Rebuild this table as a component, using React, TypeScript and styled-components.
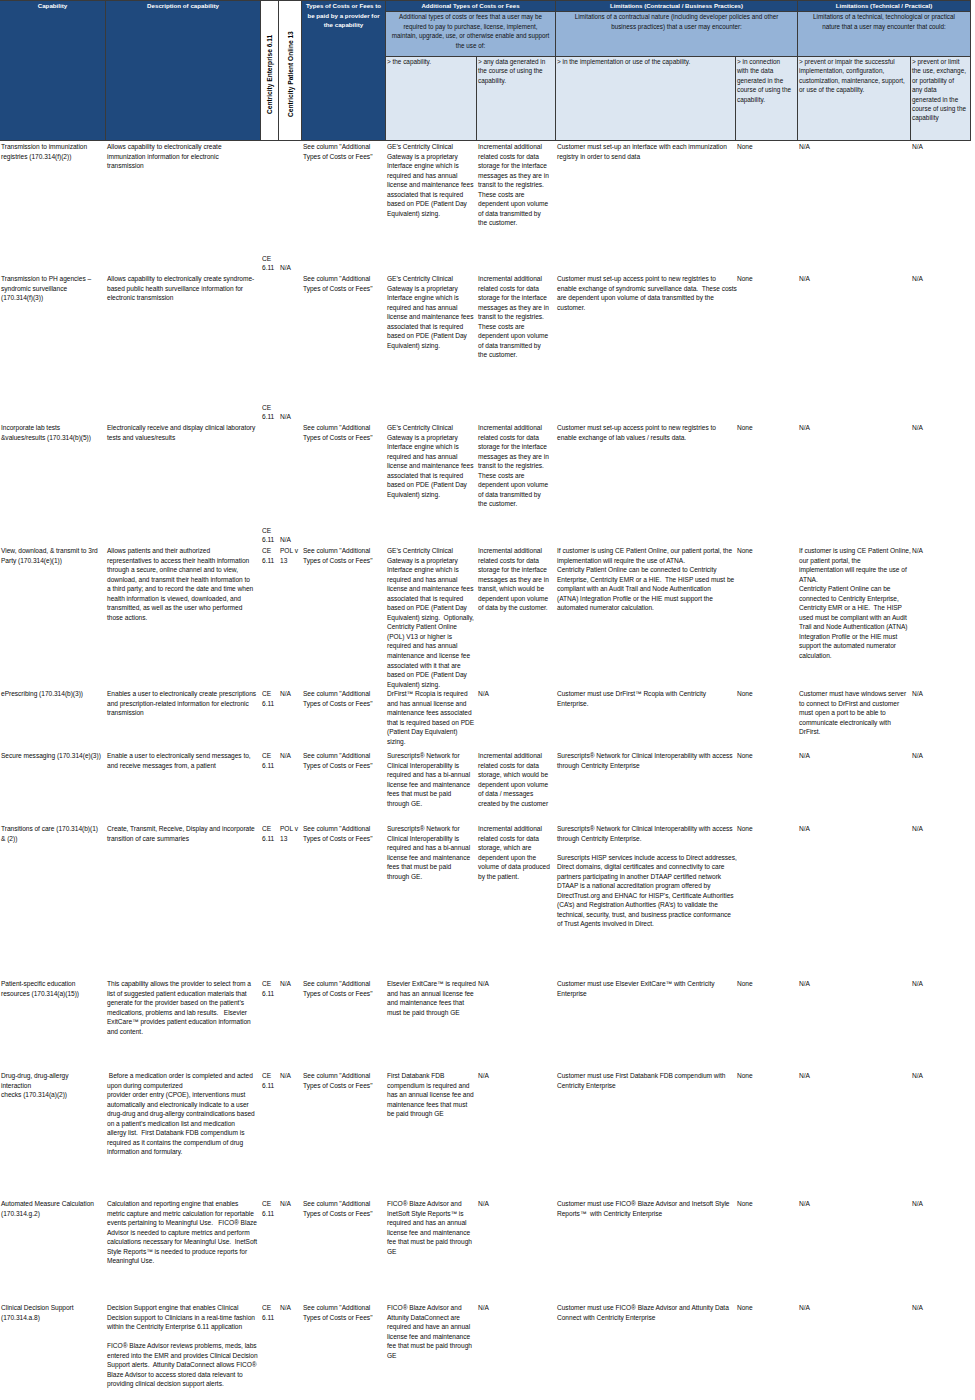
import React from "react";
import styled, { createGlobalStyle } from "styled-components";

const Global = createGlobalStyle`
  html, body { margin: 0; padding: 0; background: #ffffff; }
  body { font-family: "Liberation Sans", Arial, sans-serif; color: #0c0c0c; }
`;

const COLS = "105px 154px 17px 22px 83px 90px 78px 179px 61px 112px 59px";
const DARK = "#1f497d";
const LIGHT = "#95b3d7";
const PALE = "#dce6f1";

const Sheet = styled.div`
  width: 975px;
`;

const Header = styled.div`
  display: grid;
  grid-template-columns: ${COLS};
  grid-template-rows: 10px 44px 83px;
  gap: 1px;
  padding: 1px 1px 1px 0;
  width: max-content;
  background: #3a3a3a;
`;

const DarkColumn = styled.div<{ $col: number }>`
  grid-column: ${(p) => p.$col};
  grid-row: 1 / 4;
  background: ${DARK};
  color: #ffffff;
  font-weight: 700;
  font-size: 6.2px;
  line-height: 9.5px;
  text-align: center;
  white-space: pre;
`;

const RotatedColumn = styled.div<{ $col: number }>`
  grid-column: ${(p) => p.$col};
  grid-row: 1 / 4;
  background: #ffffff;
  writing-mode: vertical-rl;
  transform: rotate(180deg);
  display: flex;
  align-items: center;
  justify-content: center;
  padding-bottom: 8px;
  font-weight: 700;
  font-size: 6.6px;
  color: #000000;
  white-space: nowrap;
`;

const GroupTitle = styled.div<{ $cols: string }>`
  grid-column: ${(p) => p.$cols};
  grid-row: 1;
  background: ${DARK};
  color: #ffffff;
  font-weight: 700;
  font-size: 6.1px;
  line-height: 10px;
  text-align: center;
  white-space: nowrap;
`;

const GroupNote = styled.div<{ $cols: string }>`
  grid-column: ${(p) => p.$cols};
  grid-row: 2;
  background: ${LIGHT};
  color: #111111;
  font-size: 6.3px;
  line-height: 9.5px;
  text-align: center;
  white-space: pre;
`;

const SubHead = styled.div<{ $col: number }>`
  grid-column: ${(p) => p.$col};
  grid-row: 3;
  background: ${PALE};
  color: #111111;
  font-size: 6.4px;
  line-height: 9.4px;
  white-space: pre;
  padding: 0 0 0 1px;
`;

const Row = styled.div<{ $h: number }>`
  display: grid;
  grid-template-columns: ${COLS};
  column-gap: 1px;
  height: ${(p) => p.$h}px;
`;

const Cell = styled.div<{ $bottom?: boolean }>`
  align-self: ${(p) => (p.$bottom ? "end" : "start")};
  font-size: 6.6px;
  line-height: 9.55px;
  letter-spacing: -0.03px;
  white-space: pre;
  padding: 1px 0 0 1px;
  color: #0c0c0c;
`;

const SEE = 'See column "Additional\nTypes of Costs or Fees"';
const GATEWAY =
  "GE’s Centricity Clinical\nGateway is a proprietary\nInterface engine which is\nrequired and has annual\nlicense and maintenance fees\nassociated that is required\nbased on PDE (Patient Day\nEquivalent) sizing.";
const STORAGE =
  "Incremental additional\nrelated costs for data\nstorage for the interface\nmessages as they are in\ntransit to the registries.\nThese costs are\ndependent upon volume\nof data transmitted by\nthe customer.";
const SURE =
  "Surescripts® Network for\nClinical Interoperability is\nrequired and has a bi-annual\nlicense fee and maintenance\nfees that must be paid\nthrough GE.";

type RowData = { h: number; ceBottom?: boolean; cells: string[] };

const rows: RowData[] = [
  {
    h: 132,
    ceBottom: true,
    cells: [
      "Transmission to immunization\nregistries (170.314(f)(2))",
      "Allows capability to electronically create\nimmunization information for electronic\ntransmission",
      "CE\n6.11",
      "N/A",
      SEE,
      GATEWAY,
      STORAGE,
      "Customer must set-up an interface with each immunization\nregistry in order to send data",
      "None",
      "N/A",
      "N/A",
    ],
  },
  {
    h: 149,
    ceBottom: true,
    cells: [
      "Transmission to PH agencies –\nsyndromic surveillance\n(170.314(f)(3))",
      "Allows capability to electronically create syndrome-\nbased public health surveillance information for\nelectronic transmission",
      "CE\n6.11",
      "N/A",
      SEE,
      GATEWAY,
      STORAGE,
      "Customer must set-up access point to new registries to\nenable exchange of syndromic surveillance data.  These costs\nare dependent upon volume of data transmitted by the\ncustomer.",
      "None",
      "N/A",
      "N/A",
    ],
  },
  {
    h: 123,
    ceBottom: true,
    cells: [
      "Incorporate lab tests\n&values/results (170.314(b)(5))",
      "Electronically receive and display clinical laboratory\ntests and values/results",
      "CE\n6.11",
      "N/A",
      SEE,
      GATEWAY,
      STORAGE,
      "Customer must set-up access point to new registries to\nenable exchange of lab values / results data.",
      "None",
      "N/A",
      "N/A",
    ],
  },
  {
    h: 143,
    cells: [
      "View, download, & transmit to 3rd\nParty (170.314(e)(1))",
      "Allows patients and their authorized\nrepresentatives to access their health information\nthrough a secure, online channel and to view,\ndownload, and transmit their health information to\na third party; and to record the date and time when\nhealth information is viewed, downloaded, and\ntransmitted, as well as the user who performed\nthose actions.",
      "CE\n6.11",
      "POL v\n13",
      SEE,
      "GE’s Centricity Clinical\nGateway is a proprietary\nInterface engine which is\nrequired and has annual\nlicense and maintenance fees\nassociated that is required\nbased on PDE (Patient Day\nEquivalent) sizing.  Optionally,\nCentricity Patient Online\n(POL) V13 or higher is\nrequired and has annual\nmaintenance and license fee\nassociated with it that are\nbased on PDE (Patient Day\nEquivalent) sizing.",
      "Incremental additional\nrelated costs for data\nstorage for the interface\nmessages as they are in\ntransit, which would be\ndependent upon volume\nof data by the customer.",
      "If customer is using CE Patient Online, our patient portal, the\nimplementation will require the use of ATNA.\nCentricity Patient Online can be connected to Centricity\nEnterprise, Centricity EMR or a HIE.  The HISP used must be\ncompliant with an Audit Trail and Node Authentication\n(ATNA) Integration Profile or the HIE must support the\nautomated numerator calculation.",
      "None",
      "If customer is using CE Patient Online,\nour patient portal, the\nimplementation will require the use of\nATNA.\nCentricity Patient Online can be\nconnected to Centricity Enterprise,\nCentricity EMR or a HIE.  The HISP\nused must be compliant with an Audit\nTrail and Node Authentication (ATNA)\nIntegration Profile or the HIE must\nsupport the automated numerator\ncalculation.",
      "N/A",
    ],
  },
  {
    h: 62,
    cells: [
      "ePrescribing (170.314(b)(3))",
      "Enables a user to electronically create prescriptions\nand prescription-related information for electronic\ntransmission",
      "CE\n6.11",
      "N/A",
      SEE,
      "DrFirst™ Rcopia is required\nand has annual license and\nmaintenance fees associated\nthat is required based on PDE\n(Patient Day Equivalent)\nsizing.",
      "N/A",
      "Customer must use DrFirst™ Rcopia with Centricity\nEnterprise.",
      "None",
      "Customer must have windows server\nto connect to DrFirst and customer\nmust open a port to be able to\ncommunicate electronically with\nDrFirst.",
      "N/A",
    ],
  },
  {
    h: 73,
    cells: [
      "Secure messaging (170.314(e)(3))",
      "Enable a user to electronically send messages to,\nand receive messages from, a patient",
      "CE\n6.11",
      "N/A",
      SEE,
      SURE,
      "Incremental additional\nrelated costs for data\nstorage, which would be\ndependent upon volume\nof data / messages\ncreated by the customer",
      "Surescripts® Network for Clinical Interoperability with access\nthrough Centricity Enterprise",
      "None",
      "N/A",
      "N/A",
    ],
  },
  {
    h: 155,
    cells: [
      "Transitions of care (170.314(b)(1)\n& (2))",
      "Create, Transmit, Receive, Display and incorporate\ntransition of care summaries",
      "CE\n6.11",
      "POL v\n13",
      SEE,
      SURE,
      "Incremental additional\nrelated costs for data\nstorage, which are\ndependent upon the\nvolume of data produced\nby the patient.",
      "Surescripts® Network for Clinical Interoperability with access\nthrough Centricity Enterprise.\n\nSurescripts HISP services include access to Direct addresses,\nDirect domains, digital certificates and connectivity to care\npartners participating in another DTAAP certified network\nDTAAP is a national accreditation program offered by\nDirectTrust.org and EHNAC for HISP’s, Certificate Authorities\n(CA’s) and Registration Authorities (RA’s) to validate the\ntechnical, security, trust, and business practice conformance\nof Trust Agents involved in Direct.",
      "None",
      "N/A",
      "N/A",
    ],
  },
  {
    h: 92,
    cells: [
      "Patient-specific education\nresources (170.314(a)(15))",
      "This capability allows the provider to select from a\nlist of suggested patient education materials that\ngenerate for the provider based on the patient’s\nmedications, problems and lab results.   Elsevier\nExitCare™ provides patient education information\nand content.",
      "CE\n6.11",
      "N/A",
      SEE,
      "Elsevier ExitCare™ is required\nand has an annual license fee\nand maintenance fees that\nmust be paid through GE",
      "N/A",
      "Customer must use Elsevier ExitCare™ with Centricity\nEnterprise",
      "None",
      "N/A",
      "N/A",
    ],
  },
  {
    h: 128,
    cells: [
      "Drug-drug, drug-allergy\ninteraction\nchecks (170.314(a)(2))",
      " Before a medication order is completed and acted\nupon during computerized\nprovider order entry (CPOE), interventions must\nautomatically and electronically indicate to a user\ndrug-drug and drug-allergy contraindications based\non a patient’s medication list and medication\nallergy list.  First Databank FDB compendium is\nrequired as it contains the compendium of drug\ninformation and formulary.",
      "CE\n6.11",
      "N/A",
      SEE,
      "First Databank FDB\ncompendium is required and\nhas an annual license fee and\nmaintenance fees that must\nbe paid through GE",
      "N/A",
      "Customer must use First Databank FDB compendium with\nCentricity Enterprise",
      "None",
      "N/A",
      "N/A",
    ],
  },
  {
    h: 104,
    cells: [
      "Automated Measure Calculation\n(170.314.g.2)",
      "Calculation and reporting engine that enables\nmetric capture and metric calculation for reportable\nevents pertaining to Meaningful Use.   FICO® Blaze\nAdvisor is needed to capture metrics and perform\ncalculations necessary for Meaningful Use.  InetSoft\nStyle Reports™ is needed to produce reports for\nMeaningful Use.",
      "CE\n6.11",
      "N/A",
      SEE,
      "FICO® Blaze Advisor and\nInetSoft Style Reports™ is\nrequired and has an annual\nlicense fee and maintenance\nfee that must be paid through\nGE",
      "N/A",
      "Customer must use FICO® Blaze Advisor and Inetsoft Style\nReports™  with Centricity Enterprise",
      "None",
      "N/A",
      "N/A",
    ],
  },
  {
    h: 98,
    cells: [
      "Clinical Decision Support\n(170.314.a.8)",
      "Decision Support engine that enables Clinical\nDecision support to Clinicians in a real-time fashion\nwithin the Centricity Enterprise 6.11 application\n\nFICO® Blaze Advisor reviews problems, meds, labs\nentered into the EMR and provides Clinical Decision\nSupport alerts.  Attunity DataConnect allows FICO®\nBlaze Advisor to access stored data relevant to\nproviding clinical decision support alerts.",
      "CE\n6.11",
      "N/A",
      SEE,
      "FICO® Blaze Advisor and\nAttunity DataConnect are\nrequired and have an annual\nlicense fee and maintenance\nfee that must be paid through\nGE",
      "N/A",
      "Customer must use FICO® Blaze Advisor and Attunity Data\nConnect with Centricity Enterprise",
      "None",
      "N/A",
      "N/A",
    ],
  },
];

export default function App() {
  return (
    <Sheet>
      <Global />
      <Header>
        <DarkColumn $col={1}>Capability</DarkColumn>
        <DarkColumn $col={2}>Description of capability</DarkColumn>
        <RotatedColumn $col={3}>Centricity Enterprise 6.11</RotatedColumn>
        <RotatedColumn $col={4}>Centricity Patient Online 13</RotatedColumn>
        <DarkColumn $col={5}>{"Types of Costs or Fees to\nbe paid by a provider for\nthe capability"}</DarkColumn>

        <GroupTitle $cols="6 / 8">Additional Types of Costs or Fees</GroupTitle>
        <GroupNote $cols="6 / 8">
          {"Additional types of costs or fees that a user may be\nrequired to pay to purchase, license, implement,\nmaintain, upgrade, use, or otherwise enable and support\nthe use of:"}
        </GroupNote>
        <SubHead $col={6}>{"> the capability."}</SubHead>
        <SubHead $col={7}>{"> any data generated in\nthe course of using the\ncapability."}</SubHead>

        <GroupTitle $cols="8 / 10">Limitations (Contractual / Business Practices)</GroupTitle>
        <GroupNote $cols="8 / 10">
          {"Limitations of a contractual nature (including developer policies and other\nbusiness practices) that a user may encounter:"}
        </GroupNote>
        <SubHead $col={8}>{"> in the implementation or use of the capability."}</SubHead>
        <SubHead $col={9}>{"> in connection\nwith the data\ngenerated in the\ncourse of using the\ncapability."}</SubHead>

        <GroupTitle $cols="10 / 12">Limitations (Technical / Practical)</GroupTitle>
        <GroupNote $cols="10 / 12">
          {"Limitations of a technical, technological or practical\nnature that a user may encounter that could:"}
        </GroupNote>
        <SubHead $col={10}>
          {"> prevent or impair the successful\nimplementation, configuration,\ncustomization, maintenance, support,\nor use of the capability."}
        </SubHead>
        <SubHead $col={11}>
          {"> prevent or limit\nthe use, exchange,\nor portability of\nany data\ngenerated in the\ncourse of using the\ncapability"}
        </SubHead>
      </Header>

      {rows.map((r, i) => (
        <Row key={i} $h={r.h}>
          {r.cells.map((c, j) => (
            <Cell key={j} $bottom={r.ceBottom && (j === 2 || j === 3)}>
              {c}
            </Cell>
          ))}
        </Row>
      ))}
    </Sheet>
  );
}
